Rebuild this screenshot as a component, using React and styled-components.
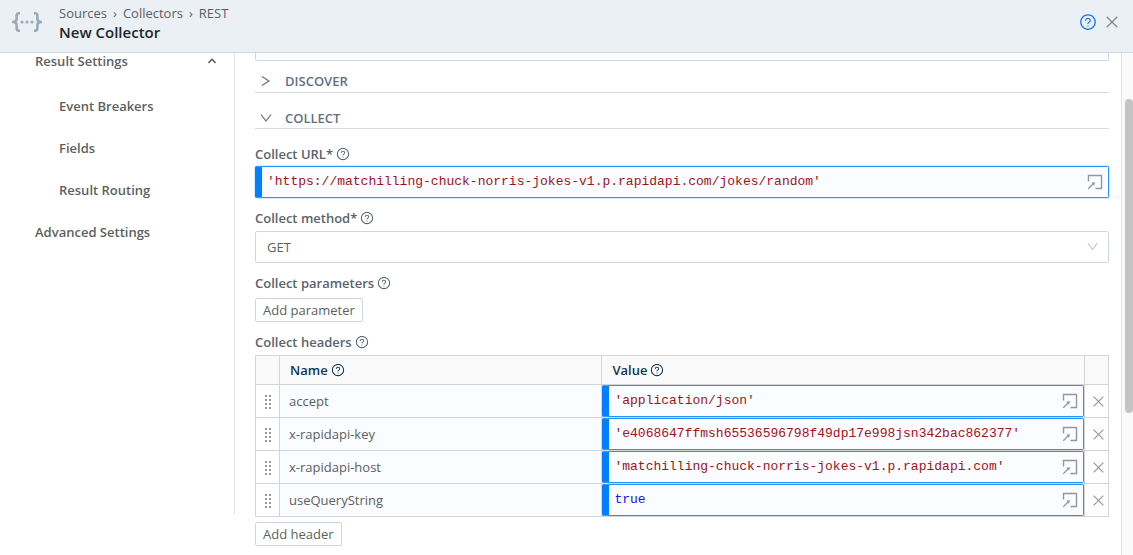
import React, { useState } from "react";
import styled, { createGlobalStyle } from "styled-components";
import { AiOutlineQuestionCircle } from "react-icons/ai";

const GlobalStyle = createGlobalStyle`
  * {
    box-sizing: border-box;
  }

  body {
    margin: 0;
    background-color: #ffffff;
    color: #5c5f61;
    font-family: "Open Sans", sans-serif;
    font-size: 13px;
    line-height: 18px;
  }

  button,
  input,
  select {
    font: inherit;
    color: inherit;
  }
`;

const Page = styled.div`
  display: flex;
  flex-direction: column;
  height: 100vh;
  overflow: hidden;
`;

const Header = styled.header`
  display: flex;
  flex-shrink: 0;
  align-items: center;
  padding: 4px 15px 10px 12px;
  background-color: #ebf0f5;
  border-bottom: 1px solid #d6d8da;
`;

const Logo = styled.div`
  display: flex;
  padding-bottom: 2px;
`;

const Titles = styled.div`
  flex: 1;
  padding-left: 17px;
`;

const Breadcrumb = styled.nav`
  display: flex;
  gap: 6px;
`;

const Crumb = styled.a`
  color: #5c5f61;
  text-decoration: none;
`;

const Title = styled.h1`
  margin: 0;
  color: #22272a;
  font-size: 15px;
  font-weight: 600;
  line-height: 20px;
`;

const IconButton = styled.button`
  display: flex;
  padding: 0;
  background: none;
  border: none;
  color: ${(props) => props.$color || "#95989a"};
  cursor: pointer;
`;

const HeaderActions = styled.div`
  display: flex;
  align-items: center;
  gap: 9px;
  padding-bottom: 2px;
`;

const Body = styled.div`
  display: flex;
  flex: 1;
  min-height: 0;
`;

const Sidebar = styled.nav`
  display: flex;
  flex-direction: column;
  flex: 0 0 235px;
  margin-bottom: 40px;
  border-right: 1px solid #e4e6e8;
`;

const Group = styled.button`
  display: flex;
  align-items: center;
  justify-content: space-between;
  margin-bottom: 16px;
  padding: 0 18px 0 35px;
  background: none;
  border: none;
  font-weight: 600;
  line-height: 16px;
  cursor: pointer;
`;

const NavItem = styled.a`
  padding: 12px 18px 12px ${(props) => (props.$nested ? "59px" : "35px")};
  color: #5c5f61;
  font-weight: 600;
  text-decoration: none;
`;

const Main = styled.main`
  flex: 1;
  min-width: 0;
  padding: 0 12px 0 20px;
  overflow: hidden;
`;

const PreviousField = styled.div`
  height: 8px;
  background-color: #fafcff;
  border: 1px solid #cbd8e0;
  border-top: none;
  border-radius: 0 0 2px 2px;
`;

const SectionHeader = styled.button`
  display: flex;
  align-items: center;
  gap: 13px;
  width: 100%;
  padding: ${(props) => (props.$open ? "16px 0 1px 5px" : "11px 0 2px 5px")};
  background: none;
  border: none;
  border-bottom: 1px solid #d9dbdc;
  color: #5f7283;
  font-weight: 600;
  text-align: left;
  cursor: pointer;
`;

const Field = styled.div`
  padding-top: ${(props) => props.$top};
`;

const LabelRow = styled.div`
  display: flex;
  align-items: center;
  gap: 3px;
  margin-bottom: ${(props) => props.$gap || "4px"};
  color: #59646c;
  font-weight: 600;
`;

const Expression = styled.div`
  display: flex;
  align-items: center;
  height: 32px;
  padding-right: 5px;
  background-color: #fafcff;
  border: 1px solid #2693ff;
  border-left: 7px solid #0080ff;
  border-radius: 2px;
  box-shadow: 0 0 0 1px rgba(24, 144, 255, 0.18);
`;

const Code = styled.input`
  flex: 1;
  min-width: 0;
  padding: 0 5px;
  background: none;
  border: none;
  outline: none;
  color: ${(props) => (props.$atom ? "#2010ee" : "#a31218")};
  font-family: "Liberation Mono", monospace;
  font-size: 13px;
`;

const SelectBox = styled.div`
  position: relative;
`;

const Select = styled.select`
  display: block;
  width: 100%;
  height: 32px;
  padding: 0 30px 0 11px;
  appearance: none;
  background-color: #ffffff;
  border: 1px solid #cbd8e0;
  border-radius: 2px;
`;

const SelectArrow = styled.span`
  display: flex;
  position: absolute;
  top: 10px;
  right: 11px;
  color: #c4c4c4;
  pointer-events: none;
`;

const AddButton = styled.button`
  display: block;
  height: 24px;
  padding: 0 7px;
  background-color: #ffffff;
  border: 1px solid #cbd8e0;
  border-radius: 2px;
  line-height: 20px;
  cursor: pointer;
`;

const Table = styled.table`
  width: 100%;
  margin-bottom: 5px;
  border-collapse: collapse;
  table-layout: fixed;
`;

const Col = styled.col`
  width: ${(props) => props.$width};
`;

const Th = styled.th`
  height: 29px;
  padding: 0 10px;
  background-color: #fafafa;
  border: 1px solid #d2d4d6;
  text-align: left;
`;

const ThLabel = styled.span`
  display: flex;
  align-items: center;
  gap: 3px;
  color: #103650;
  font-weight: 600;
`;

const Td = styled.td`
  height: 33px;
  padding: 0;
  background-color: ${(props) => (props.$filled ? "#fafcff" : "#ffffff")};
  border: 1px solid #d2d4d6;
`;

const NameInput = styled.input`
  display: block;
  width: 100%;
  height: 32px;
  padding: 0 9px;
  background: none;
  border: none;
  outline: none;
`;

const CellCenter = styled.div`
  display: flex;
  justify-content: center;
  padding-top: 1px;
  padding-left: ${(props) => props.$left};
`;

const ScrollTrack = styled.div`
  display: flex;
  flex-direction: column;
  flex-shrink: 0;
  width: 12px;
  padding-left: 3px;
  background-color: #fafafa;
  border-left: 1px solid #e4e4e4;
`;

const ScrollSpace = styled.div`
  flex: ${(props) => props.$size};
`;

const ScrollThumb = styled.div`
  flex: 314;
  background-color: #c4c4c4;
  border-radius: 4px;
`;

const Help = () => <AiOutlineQuestionCircle size={14} aria-hidden="true" />;

const BracesIcon = () => (
  <svg width="30" height="22" viewBox="0 0 30 22" fill="none" aria-hidden="true">
    <path
      d="M8 2.300H7C5.400 2.300 4.600 3.100 4.600 4.700V8C4.600 10 3.400 11 .8 11C3.400 11 4.600 12 4.600 14V17.300C4.600 18.900 5.400 19.700 7 19.700H8M22 2.300H23C24.600 2.300 25.400 3.100 25.400 4.700V8C25.400 10 26.600 11 29.200 11C26.600 11 25.400 12 25.400 14V17.300C25.400 18.900 24.600 19.700 23 19.700H22"
      stroke="#9aabb7"
      strokeWidth="2.6"
      strokeLinejoin="round"
    />
    <circle cx="10" cy="11" r="1.6" fill="#9aabb7" />
    <circle cx="15" cy="11" r="1.6" fill="#9aabb7" />
    <circle cx="20" cy="11" r="1.6" fill="#9aabb7" />
  </svg>
);

const CloseIcon = ({ size }) => (
  <svg width={size} height={size} viewBox="0 0 12 12" fill="none" aria-hidden="true">
    <path d="M.7.7L11.3 11.3M11.3.7L.7 11.3" stroke="currentColor" strokeWidth="1.3" />
  </svg>
);

const ChevronDown = ({ size = 12, stroke = 1.2 }) => (
  <svg width={size} height={size} viewBox="0 0 12 12" fill="none" aria-hidden="true">
    <path d="M1 2.500L6 9L11 2.500" stroke="currentColor" strokeWidth={stroke} />
  </svg>
);

const ChevronRight = () => (
  <svg width="12" height="12" viewBox="0 0 12 12" fill="none" aria-hidden="true">
    <path d="M2 1.500L9 6L2 10.500" stroke="currentColor" strokeWidth="1.2" />
  </svg>
);

const ChevronUp = () => (
  <svg width="8" height="6" viewBox="0 0 8 6" fill="none" aria-hidden="true">
    <path d="M.5 5L4 1.300L7.500 5" stroke="currentColor" strokeWidth="1.6" />
  </svg>
);

const ExpandIcon = () => (
  <svg width="16" height="16" viewBox="0 0 16 16" fill="none" aria-hidden="true">
    <path d="M1.500 7.500V1.500H14.500V14.500H8.500" stroke="currentColor" strokeWidth="1.4" />
    <path d="M1.300 14.700L6.500 9.500" stroke="currentColor" strokeWidth="1.3" />
    <path d="M4.300 8.800L7.900 8.100L7.200 11.700Z" fill="currentColor" />
  </svg>
);

const DragIcon = () => (
  <svg width="8" height="14" viewBox="0 0 8 14" fill="#95989a" aria-hidden="true">
    {[0, 4, 8, 12].map((y) => (
      <React.Fragment key={y}>
        <rect x="1" y={y} width="2" height="2" />
        <rect x="5" y={y} width="2" height="2" />
      </React.Fragment>
    ))}
  </svg>
);

const ExpressionInput = ({ id, label, value, atom, onChange }) => (
  <Expression>
    <Code
      id={id}
      aria-label={label}
      value={value}
      $atom={atom}
      spellCheck={false}
      onChange={(e) => onChange(e.target.value)}
    />
    <IconButton type="button" aria-label="Expand editor">
      <ExpandIcon />
    </IconButton>
  </Expression>
);

const initialHeaders = [
  { id: 1, name: "accept", value: "'application/json'" },
  {
    id: 2,
    name: "x-rapidapi-key",
    value: "'e4068647ffmsh65536596798f49dp17e998jsn342bac862377'",
  },
  {
    id: 3,
    name: "x-rapidapi-host",
    value: "'matchilling-chuck-norris-jokes-v1.p.rapidapi.com'",
  },
  { id: 4, name: "useQueryString", value: "true" },
];

const App = () => {
  const [url, setUrl] = useState(
    "'https://matchilling-chuck-norris-jokes-v1.p.rapidapi.com/jokes/random'"
  );
  const [headers, setHeaders] = useState(initialHeaders);

  const updateHeader = (id, change) =>
    setHeaders(headers.map((h) => (h.id === id ? { ...h, ...change } : h)));
  const removeHeader = (id) => setHeaders(headers.filter((h) => h.id !== id));
  const addHeader = () =>
    setHeaders([...headers, { id: Date.now(), name: "", value: "" }]);

  return (
    <Page>
      <GlobalStyle />
      <Header>
        <Logo>
          <BracesIcon />
        </Logo>
        <Titles>
          <Breadcrumb aria-label="Breadcrumb">
            <Crumb href="#sources">Sources</Crumb>
            <span>›</span>
            <Crumb href="#collectors">Collectors</Crumb>
            <span>›</span>
            <Crumb href="#rest">REST</Crumb>
          </Breadcrumb>
          <Title>New Collector</Title>
        </Titles>
        <HeaderActions>
          <IconButton type="button" $color="#1677f0" aria-label="Help">
            <AiOutlineQuestionCircle size={18} />
          </IconButton>
          <IconButton type="button" $color="#85898c" aria-label="Close">
            <CloseIcon size={12} />
          </IconButton>
        </HeaderActions>
      </Header>
      <Body>
        <Sidebar aria-label="Collector settings">
          <Group type="button" aria-expanded="true">
            Result Settings
            <ChevronUp />
          </Group>
          <NavItem href="#event-breakers" $nested>
            Event Breakers
          </NavItem>
          <NavItem href="#fields" $nested>
            Fields
          </NavItem>
          <NavItem href="#result-routing" $nested>
            Result Routing
          </NavItem>
          <NavItem href="#advanced">Advanced Settings</NavItem>
        </Sidebar>
        <Main>
          <PreviousField />
          <SectionHeader type="button" aria-expanded="false">
            <ChevronRight />
            DISCOVER
          </SectionHeader>
          <SectionHeader type="button" aria-expanded="true" $open>
            <ChevronDown />
            COLLECT
          </SectionHeader>
          <Field $top="16px">
            <LabelRow $gap="3px">
              <label htmlFor="collect-url">Collect URL*</label>
              <Help />
            </LabelRow>
            <ExpressionInput id="collect-url" value={url} onChange={setUrl} />
          </Field>
          <Field $top="11px">
            <LabelRow>
              <label htmlFor="collect-method">Collect method*</label>
              <Help />
            </LabelRow>
            <SelectBox>
              <Select id="collect-method" defaultValue="GET">
                <option>GET</option>
                <option>POST</option>
              </Select>
              <SelectArrow>
                <ChevronDown size={11} />
              </SelectArrow>
            </SelectBox>
          </Field>
          <Field $top="11px">
            <LabelRow $gap="6px">
              <span>Collect parameters</span>
              <Help />
            </LabelRow>
            <AddButton type="button">Add parameter</AddButton>
          </Field>
          <Field $top="11px">
            <LabelRow>
              <span id="headers-label">Collect headers</span>
              <Help />
            </LabelRow>
            <Table aria-labelledby="headers-label">
              <colgroup>
                <Col $width="24px" />
                <Col $width="37.8%" />
                <Col />
                <Col $width="24px" />
              </colgroup>
              <thead>
                <tr>
                  <Th />
                  <Th>
                    <ThLabel>
                      Name <Help />
                    </ThLabel>
                  </Th>
                  <Th>
                    <ThLabel>
                      Value <Help />
                    </ThLabel>
                  </Th>
                  <Th />
                </tr>
              </thead>
              <tbody>
                {headers.map((header) => (
                  <tr key={header.id}>
                    <Td>
                      <CellCenter $left="1px">
                        <DragIcon />
                      </CellCenter>
                    </Td>
                    <Td $filled>
                      <NameInput
                        aria-label="Header name"
                        value={header.name}
                        onChange={(e) =>
                          updateHeader(header.id, { name: e.target.value })
                        }
                      />
                    </Td>
                    <Td>
                      <ExpressionInput
                        label="Header value"
                        value={header.value}
                        atom={header.value === "true"}
                        onChange={(value) => updateHeader(header.id, { value })}
                      />
                    </Td>
                    <Td>
                      <CellCenter $left="4px">
                        <IconButton
                          type="button"
                          aria-label="Remove header"
                          onClick={() => removeHeader(header.id)}
                        >
                          <CloseIcon size={11} />
                        </IconButton>
                      </CellCenter>
                    </Td>
                  </tr>
                ))}
              </tbody>
            </Table>
            <AddButton type="button" onClick={addHeader}>
              Add header
            </AddButton>
          </Field>
        </Main>
        <ScrollTrack>
          <ScrollSpace $size={46} />
          <ScrollThumb />
          <ScrollSpace $size={142} />
        </ScrollTrack>
      </Body>
    </Page>
  );
};

export default App;
